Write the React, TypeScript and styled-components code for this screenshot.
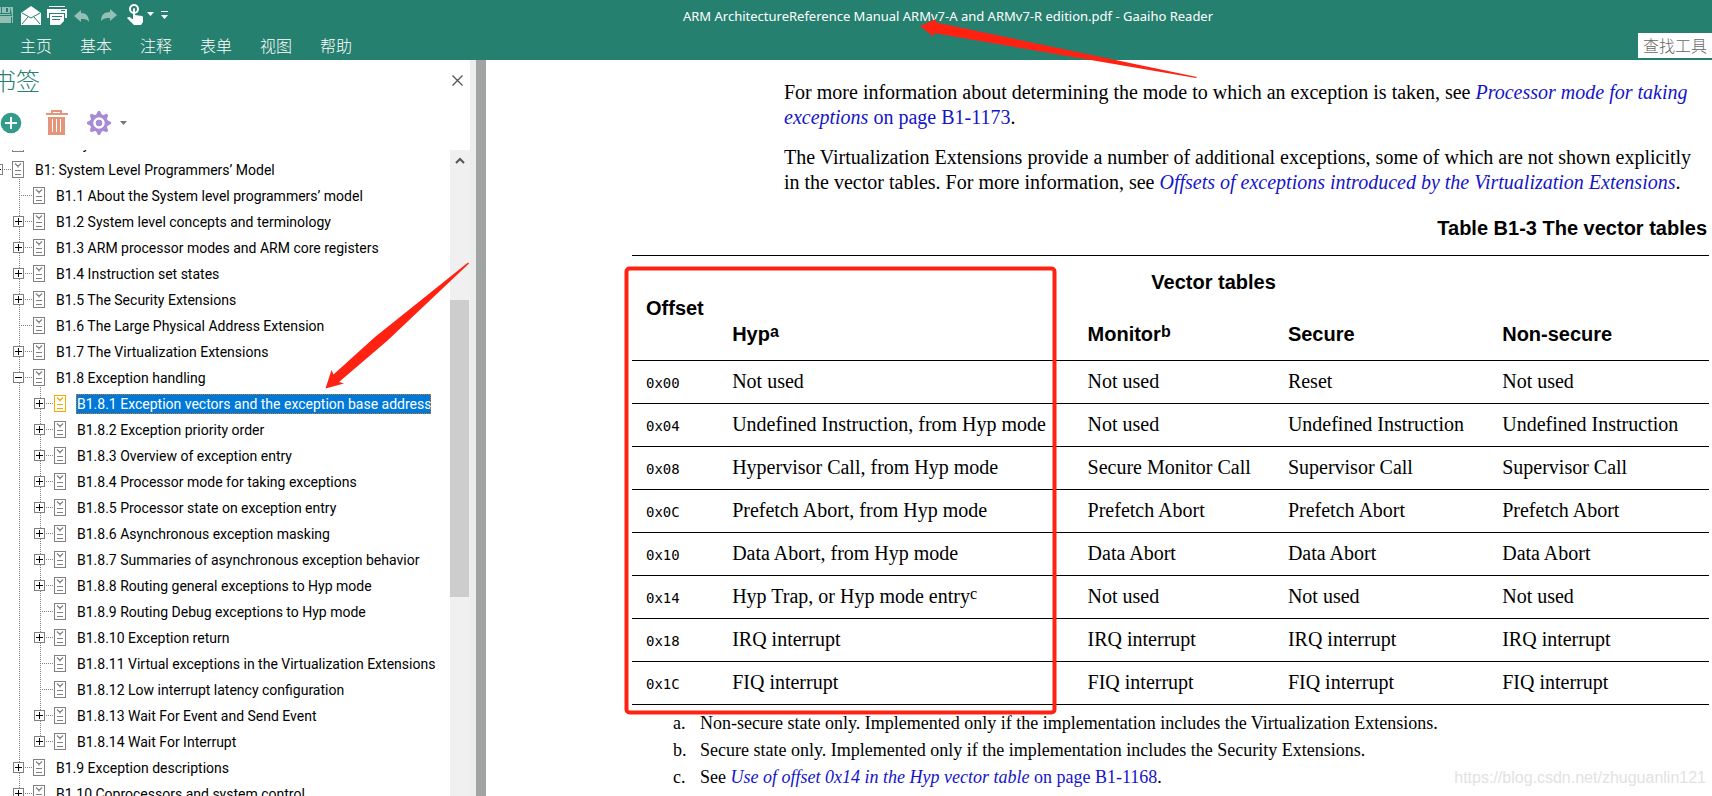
import React from "react";
import styled, { createGlobalStyle, css } from "styled-components";

const ui = `"Noto Sans", "Noto Sans CJK SC", sans-serif`;
const treeFont = `Roboto, "Noto Sans", sans-serif`;
const cjk = `"Noto Sans CJK SC", "Noto Sans", sans-serif`;

const Global = createGlobalStyle`
  * { box-sizing: border-box; }
  body { margin: 0; background: #fff; color: #000; overflow: hidden; }
  button { border: 0; padding: 0; background: none; font: inherit; color: inherit; }
`;

const Window = styled.div`
  position: relative;
  display: flex;
  flex-direction: column;
  height: 100vh;
  overflow: hidden;
`;
const Header = styled.header`
  flex: none;
  height: 60px;
  background: #26806f;
  color: #fff;
  display: flex;
  flex-direction: column;
`;
const TitleBar = styled.div`
  display: grid;
  grid-template-columns: 1fr auto 1fr;
  align-items: center;
  height: 28px;
`;
const QuickTools = styled.div`
  display: flex;
  align-items: center;
`;
const Title = styled.h1`
  margin: 0;
  padding: 2px 0 0 184px;
  font: 400 13px/28px ${ui};
`;
const QuickButton = styled.button<{ $w: number; $dim?: boolean }>`
  width: ${(p) => p.$w}px;
  height: 28px;
  display: flex;
  align-items: center;
  opacity: ${(p) => (p.$dim ? 0.5 : 1)};
`;
const MenuBar = styled.nav`
  display: flex;
  justify-content: space-between;
  align-items: center;
  height: 32px;
  padding: 2px 0 0 20px;
`;
const Menus = styled.div`
  display: flex;
  gap: 28px;
`;
const MenuButton = styled.button`
  font: 300 16px/24px ${cjk};
`;
const SearchBox = styled.input`
  width: 74px;
  height: 25px;
  padding: 0 0 0 5px;
  border: 0;
  border-radius: 0;
  background: #fff;
  font: 300 16px/24px ${cjk};
  &::placeholder { color: #666; opacity: 1; }
`;
const Body = styled.div`
  flex: 1;
  min-height: 0;
  display: flex;
`;
const Sidebar = styled.aside`
  flex: none;
  width: 470px;
  display: flex;
  flex-direction: column;
`;
const PanelHead = styled.div`
  display: flex;
  justify-content: space-between;
  align-items: center;
  height: 40px;
  padding-right: 3px;
`;
const PanelTitle = styled.h2`
  margin: 0 0 0 -8px;
  color: #26806f;
  font: 300 24px/40px ${cjk};
`;
const PanelTools = styled.div`
  display: flex;
  align-items: center;
  height: 50px;
  padding-bottom: 4px;
`;
const ToolButton = styled.button<{ $w: number }>`
  width: ${(p) => p.$w}px;
  height: 32px;
  display: flex;
  align-items: center;
`;
const Square = styled.button`
  width: 20px;
  height: 20px;
  display: grid;
  place-items: center;
`;
const TreeArea = styled.div`
  flex: 1;
  min-height: 0;
  display: flex;
`;
const TreeView = styled.div`
  flex: 1;
  min-width: 0;
  overflow: hidden;
`;
const TreeList = styled.ul`
  list-style: none;
  margin: -19px 0 0 -8px;
  padding: 0;
`;
const TreeRow = styled.li`
  display: flex;
  align-items: center;
  height: 26px;
`;
const Glyph = styled.svg`
  flex: none;
  display: block;
`;
const TreeLabel = styled.a<{ $on: boolean }>`
  margin-left: 10px;
  height: 20px;
  padding: 0 0 0 1px;
  font: 400 14px/20px ${treeFont};
  white-space: nowrap;
  text-decoration: none;
  color: #000;
  ${(p) =>
    p.$on &&
    css`
      background: #0078d7;
      color: #fff;
      outline: 1px dotted #d9731a;
      outline-offset: -1px;
    `}
`;
const ScrollBar = styled.div`
  flex: none;
  width: 20px;
  background: #f0f0f0;
  display: flex;
  flex-direction: column;
`;
const ScrollUp = styled.button`
  height: 20px;
  display: grid;
  place-items: center;
`;
const Thumb = styled.div`
  width: 19px;
  height: 297px;
  margin-top: 130px;
  background: #cdcdcd;
`;
const Edge = styled.div`
  flex: none;
  width: 6px;
  background: #ededed;
`;
const Splitter = styled.div`
  flex: none;
  width: 10px;
  background: #a0a4a4;
`;
const Page = styled.main`
  flex: 1;
  min-width: 0;
  overflow: hidden;
  padding: 20px 3px 0 146px;
  font: 400 20px/25px "Liberation Serif", serif;
`;
const Para = styled.p`
  margin: 0 0 15px 152px;
`;
const Ref = styled.a`
  color: #1414c8;
  text-decoration: none;
`;
const DataTable = styled.table`
  width: 100%;
  table-layout: fixed;
  border-collapse: collapse;
`;
const Caption = styled.caption`
  padding: 6px 2px 15px 0;
  text-align: right;
  font: 700 20px/24px "Liberation Sans", sans-serif;
`;
const Head = styled.th<{ $center?: boolean; $top?: boolean }>`
  height: ${(p) => (p.$center ? 52 : 53)}px;
  padding: 0 0 0 ${(p) => (p.$center ? 0 : 14)}px;
  text-align: ${(p) => (p.$center ? "center" : "left")};
  border-top: ${(p) => (p.$top ? "1px solid #000" : "0")};
  font: 700 20px/24px "Liberation Sans", sans-serif;
`;
const Cell = styled.td`
  height: 43px;
  padding: 0 0 2px 14px;
  border-top: 1px solid #000;
  border-bottom: 1px solid #000;
  white-space: nowrap;
`;
const Code = styled.code`
  font: 400 14px/20px "DejaVu Sans Mono", monospace;
`;
const Sup = styled.sup`
  font-size: 16px;
  line-height: 0;
  vertical-align: 4px;
`;
const Notes = styled.ol`
  list-style: none;
  margin: 5px 0 0 41px;
  padding: 0;
  font-size: 18px;
  line-height: 27px;
`;
const Note = styled.li`
  display: grid;
  grid-template-columns: 27px 1fr;
`;
const Watermark = styled.div`
  position: absolute;
  right: 6px;
  bottom: 6px;
  color: #e2e2e2;
  font: 400 16px/24px "Liberation Sans", sans-serif;
`;
const Marks = styled.svg`
  position: absolute;
  left: 0;
  top: 0;
  pointer-events: none;
`;

type Item = { level: number; label: string; box?: "+" | "-"; on?: boolean; last?: boolean };
const items: Item[] = [
  { level: 0, label: "Glossary", box: "+" },
  { level: 0, label: "B1: System Level Programmers’ Model", box: "-" },
  { level: 1, label: "B1.1 About the System level programmers’ model" },
  { level: 1, label: "B1.2 System level concepts and terminology", box: "+" },
  { level: 1, label: "B1.3 ARM processor modes and ARM core registers", box: "+" },
  { level: 1, label: "B1.4 Instruction set states", box: "+" },
  { level: 1, label: "B1.5 The Security Extensions", box: "+" },
  { level: 1, label: "B1.6 The Large Physical Address Extension" },
  { level: 1, label: "B1.7 The Virtualization Extensions", box: "+" },
  { level: 1, label: "B1.8 Exception handling", box: "-" },
  { level: 2, label: "B1.8.1 Exception vectors and the exception base address", box: "+", on: true },
  { level: 2, label: "B1.8.2 Exception priority order", box: "+" },
  { level: 2, label: "B1.8.3 Overview of exception entry", box: "+" },
  { level: 2, label: "B1.8.4 Processor mode for taking exceptions", box: "+" },
  { level: 2, label: "B1.8.5 Processor state on exception entry", box: "+" },
  { level: 2, label: "B1.8.6 Asynchronous exception masking", box: "+" },
  { level: 2, label: "B1.8.7 Summaries of asynchronous exception behavior", box: "+" },
  { level: 2, label: "B1.8.8 Routing general exceptions to Hyp mode", box: "+" },
  { level: 2, label: "B1.8.9 Routing Debug exceptions to Hyp mode" },
  { level: 2, label: "B1.8.10 Exception return", box: "+" },
  { level: 2, label: "B1.8.11 Virtual exceptions in the Virtualization Extensions" },
  { level: 2, label: "B1.8.12 Low interrupt latency configuration" },
  { level: 2, label: "B1.8.13 Wait For Event and Send Event", box: "+" },
  { level: 2, label: "B1.8.14 Wait For Interrupt", box: "+", last: true },
  { level: 1, label: "B1.9 Exception descriptions", box: "+" },
  { level: 1, label: "B1.10 Coprocessors and system control", box: "+" },
];

const Guide = () => (
  <Glyph width="21" height="26" aria-hidden>
    <path d="M6.5 0V26" stroke="#808080" strokeDasharray="1 1" />
  </Glyph>
);

const Connector = ({ item }: { item: Item }) => (
  <Glyph width="20" height="26" aria-hidden>
    {item.level > 0 && (
      <path d={item.last ? "M6.5 0V12" : "M6.5 0V26"} stroke="#808080" strokeDasharray="1 1" />
    )}
    <path d="M6 12.5H20" stroke="#808080" strokeDasharray="1 1" />
    {item.box && (
      <>
        <rect x="0.5" y="7.5" width="10" height="10" fill="#fff" stroke="#808080" />
        <path d={item.box === "+" ? "M2 12.5H9M5.5 9V16" : "M2 12.5H9"} stroke="#000" />
      </>
    )}
  </Glyph>
);

const Bookmark = ({ item }: { item: Item }) => {
  const c = item.on ? "#f5a800" : "#808080";
  return (
    <Glyph width="12" height="26" fill="none" aria-hidden>
      <rect x="0.5" y="4.5" width="11" height="16" stroke={c} />
      <path d="M3 6.5L6 9.5L9 6.5M6 8V10.5" stroke={c} strokeWidth="1.2" />
      <path d="M3 13.5H9M3 17.5H9" stroke={c} />
      {item.box === "-" && <path d="M7.5 22V26" stroke="#808080" strokeDasharray="1 1" />}
    </Glyph>
  );
};

const rows: [string, React.ReactNode, string, string, string][] = [
  ["0x00", "Not used", "Not used", "Reset", "Not used"],
  ["0x04", "Undefined Instruction, from Hyp mode", "Not used", "Undefined Instruction", "Undefined Instruction"],
  ["0x08", "Hypervisor Call, from Hyp mode", "Secure Monitor Call", "Supervisor Call", "Supervisor Call"],
  ["0x0C", "Prefetch Abort, from Hyp mode", "Prefetch Abort", "Prefetch Abort", "Prefetch Abort"],
  ["0x10", "Data Abort, from Hyp mode", "Data Abort", "Data Abort", "Data Abort"],
  ["0x14", <>Hyp Trap, or Hyp mode entry<Sup>c</Sup></>, "Not used", "Not used", "Not used"],
  ["0x18", "IRQ interrupt", "IRQ interrupt", "IRQ interrupt", "IRQ interrupt"],
  ["0x1C", "FIQ interrupt", "FIQ interrupt", "FIQ interrupt", "FIQ interrupt"],
];

export default function App() {
  return (
    <Window>
      <Global />
      <Header>
        <TitleBar>
          <QuickTools>
            <QuickButton $w={21} $dim aria-label="Save">
              <svg width="13" height="28" fill="#fff">
                <path d="M0 6H1V12H0ZM10 6H11V13H0V14H11V6H13V22H12V16H0V15H12V14ZM0 16H11V22H0Z" />
                <path fillRule="evenodd" d="M2 6H10V12H2ZM6 7V11H8V7Z" />
              </svg>
            </QuickButton>
            <QuickButton $w={26} aria-label="Mail">
              <svg width="20" height="28" fill="#fff">
                <path d="M0 12L10 5L20 12V24H0Z" />
                <path d="M1 12L10 17L19 12M1 23L7 16M19 23L13 16" stroke="#26806f" fill="none" />
              </svg>
            </QuickButton>
            <QuickButton $w={27} aria-label="Print">
              <svg width="20" height="28" fill="#fff">
                <path d="M2 5H18V6H2Z" />
                <path fillRule="evenodd" d="M0 8H20V17H18V12H2V17H0ZM14 9V10H18V9Z" />
                <path fillRule="evenodd" d="M3 13H17V20L13 24H3ZM5 15V16H15V15ZM5 18V19H13V18Z" />
              </svg>
            </QuickButton>
            <QuickButton $w={27} $dim aria-label="Undo">
              <svg width="16" height="28" fill="#fff">
                <path d="M0 15L7 9V12C12 12 15 15 15 21C13 18 11 18 7 18V21Z" />
              </svg>
            </QuickButton>
            <QuickButton $w={26} $dim aria-label="Redo">
              <svg width="16" height="28" fill="#fff">
                <path d="M16 14L9 8V11C3 11 0 14 0 20C3 17 5 17 9 17V20Z" />
              </svg>
            </QuickButton>
            <QuickButton $w={34} aria-label="Touch mode">
              <svg width="28" height="28" fill="#fff">
                <circle cx="7" cy="8" r="4" fill="none" stroke="#fff" strokeWidth="2" />
                <path d="M6 8Q7 6 8 8V14L15 15Q16 15 16 17V21L14 24H7L0 17Q2 15 4 17L5 18H6Z" />
                <path d="M20 11H27L23.5 15Z" />
              </svg>
            </QuickButton>
            <QuickButton $w={10} aria-label="Customize toolbar">
              <svg width="8" height="28" fill="#fff">
                <path d="M0 10H7V11H0ZM0 14H7L3.5 18Z" />
              </svg>
            </QuickButton>
          </QuickTools>
          <Title>ARM ArchitectureReference Manual ARMv7-A and ARMv7-R edition.pdf - Gaaiho Reader</Title>
        </TitleBar>
        <MenuBar>
          <Menus>
            {["主页", "基本", "注释", "表单", "视图", "帮助"].map((m) => (
              <MenuButton key={m}>{m}</MenuButton>
            ))}
          </Menus>
          <SearchBox aria-label="查找工具" placeholder="查找工具" />
        </MenuBar>
      </Header>
      <Body>
        <Sidebar>
          <PanelHead>
            <PanelTitle>书签</PanelTitle>
            <Square aria-label="Close">
              <svg width="11" height="11" stroke="#555" strokeWidth="1.3">
                <path d="M0.5 0.5L10.5 10.5M10.5 0.5L0.5 10.5" />
              </svg>
            </Square>
          </PanelHead>
          <PanelTools>
            <ToolButton $w={46} aria-label="Add bookmark">
              <svg width="22" height="22">
                <circle cx="11" cy="11" r="10.3" fill="#309c89" />
                <path d="M11 5V17M5 11H17" stroke="#fff" strokeWidth="2" />
              </svg>
            </ToolButton>
            <ToolButton $w={41} aria-label="Delete bookmark">
              <svg width="22" height="26" fill="#e5967a">
                <path fillRule="evenodd" d="M0 3H5V0H16V3H22V5H0ZM7 2V3H14V2Z" />
                <path fillRule="evenodd" d="M2 7H19V25H2ZM6 9V22H7V9ZM10 9V22H11V9ZM14 9V22H15V9Z" />
              </svg>
            </ToolButton>
            <ToolButton $w={42} aria-label="Options">
              <svg width="42" height="26" viewBox="0 0 42 26">
                <g fill="#a78bd5">
                  {[0, 45, 90, 135].map((a) => (
                    <path key={a} d="M11 1H13L15 5V21L13 25H11L9 21V5Z" transform={`rotate(${a} 12 13)`} />
                  ))}
                </g>
                <circle cx="12" cy="13" r="9" fill="#a78bd5" />
                <circle cx="12" cy="13" r="4.5" fill="#a78bd5" stroke="#fff" strokeWidth="2.5" />
                <path d="M33 11H40L36.5 15Z" fill="#777" />
              </svg>
            </ToolButton>
          </PanelTools>
          <TreeArea>
            <TreeView>
              <TreeList>
                {items.map((item) => (
                  <TreeRow key={item.label}>
                    {item.level > 0 && <Glyph width="21" height="26" aria-hidden />}
                    {item.level > 1 && <Guide />}
                    <Connector item={item} />
                    <Bookmark item={item} />
                    <TreeLabel href="#" $on={!!item.on}>{item.label}</TreeLabel>
                  </TreeRow>
                ))}
              </TreeList>
            </TreeView>
            <ScrollBar>
              <ScrollUp aria-label="Scroll up">
                <svg width="10" height="8" fill="none" stroke="#555" strokeWidth="2">
                  <path d="M1 7L5 3L9 7" />
                </svg>
              </ScrollUp>
              <Thumb />
            </ScrollBar>
          </TreeArea>
        </Sidebar>
        <Edge />
        <Splitter />
        <Page>
          <Para>
            For more information about determining the mode to which an exception is taken, see{" "}
            <Ref href="#"><em>Processor mode for taking exceptions</em> on page B1-1173</Ref>.
          </Para>
          <Para>
            The Virtualization Extensions provide a number of additional exceptions, some of which are not shown
            explicitly in the vector tables. For more information, see{" "}
            <Ref href="#"><em>Offsets of exceptions introduced by the Virtualization Extensions</em></Ref>.
          </Para>
          <DataTable>
            <Caption>Table B1-3 The vector tables</Caption>
            <colgroup>
              <col style={{ width: "8%" }} />
              <col style={{ width: "33%" }} />
              <col style={{ width: "18.6%" }} />
              <col style={{ width: "19.9%" }} />
              <col />
            </colgroup>
            <thead>
              <tr>
                <Head rowSpan={2} $top scope="col">Offset</Head>
                <Head colSpan={4} $center $top scope="colgroup">Vector tables</Head>
              </tr>
              <tr>
                <Head scope="col">Hyp<Sup>a</Sup></Head>
                <Head scope="col">Monitor<Sup>b</Sup></Head>
                <Head scope="col">Secure</Head>
                <Head scope="col">Non-secure</Head>
              </tr>
            </thead>
            <tbody>
              {rows.map(([offset, ...cells]) => (
                <tr key={offset}>
                  <Cell><Code>{offset}</Code></Cell>
                  {cells.map((c, i) => <Cell key={i}>{c}</Cell>)}
                </tr>
              ))}
            </tbody>
          </DataTable>
          <Notes>
            <Note>
              <span>a.</span>
              <span>Non-secure state only. Implemented only if the implementation includes the Virtualization Extensions.</span>
            </Note>
            <Note>
              <span>b.</span>
              <span>Secure state only. Implemented only if the implementation includes the Security Extensions.</span>
            </Note>
            <Note>
              <span>c.</span>
              <span>See <Ref href="#"><em>Use of offset 0x14 in the Hyp vector table</em> on page B1-1168</Ref>.</span>
            </Note>
          </Notes>
        </Page>
      </Body>
      <Watermark>https://blog.csdn.net/zhuguanlin121</Watermark>
      <Marks width="1712" height="796" fill="#ff2213" aria-hidden>
        <path d="M920 26L936 19V22.5L1197 77L1196 78L933.5 33L934 37Z" />
        <path d="M325.5 388.5L331.500 370L333.500 374.500L375 337L468 262.500L469 263.500L387 341L339 382L344 383.500Z" />
        <rect x="626.5" y="268.5" width="428" height="444" rx="3" fill="none" stroke="#ff2213" strokeWidth="4" />
      </Marks>
    </Window>
  );
}
